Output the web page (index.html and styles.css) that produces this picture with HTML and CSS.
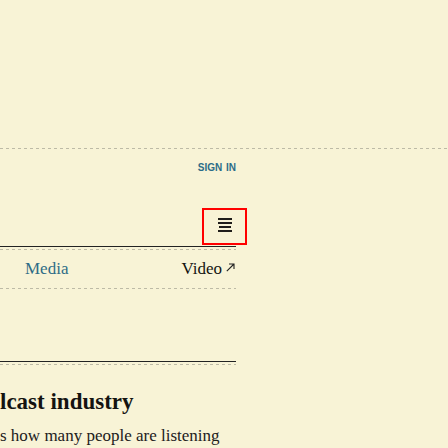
FILE: index.html
```html
<!DOCTYPE html>
<html lang="en">
<head>
<meta charset="utf-8">
<title>Podcast industry</title>
<link rel="stylesheet" href="styles.css">
</head>
<body>
<div class="page">
  <div class="rule-dash rule-full"></div>
  <header class="masthead">
    <div class="signin-row"><a class="signin" href="#">SIGN IN</a></div>
    <div class="menu-row">
      <button class="menu-btn" type="button" aria-label="Menu">
        <svg width="14" height="14" viewBox="0 0 14 14" aria-hidden="true">
          <rect x="0" y="0" width="14" height="2" fill="#1f1d1a"/>
          <rect x="0" y="4" width="14" height="2" fill="#1f1d1a"/>
          <rect x="1" y="8" width="12" height="2" fill="#1f1d1a"/>
          <rect x="0" y="12" width="14" height="2" fill="#1f1d1a"/>
        </svg>
      </button>
    </div>
  </header>
  <nav class="nav col">
    <div class="rule-solid"></div>
    <div class="rule-dash gap2"></div>
    <div class="nav-row">
      <a class="nav-media" href="#">Media</a>
      <a class="nav-video" href="#">Video<svg class="ext" width="9" height="9" viewBox="0 0 9 9" aria-hidden="true"><path d="M0.8 8.2 L8 1 M3 1 H8 V6" fill="none" stroke="#222" stroke-width="1.1"/></svg></a>
    </div>
    <div class="rule-dash"></div>
  </nav>
  <section class="article col">
    <div class="rule-solid"></div>
    <div class="rule-dash gap2"></div>
    <h2 class="headline">lcast industry</h2>
    <p class="standfirst">s how many people are listening<br>and the industry</p>
  </section>
</div>
</body>
</html>
```
FILE: styles.css
```css
html, body {
  margin: 0;
  padding: 0;
  background: #f8f3d6;
  overflow: hidden;
}
.page {
  padding-top: 148px;
  height: 300px;
}
.rule-dash {
  height: 1px;
  background: repeating-linear-gradient(to right, #bdbaa6 0 3px, transparent 3px 6px);
}
.rule-solid {
  height: 1px;
  background: #222;
}
.gap2 { margin-top: 2px; }
.masthead {
  width: 247px;
  display: flex;
  flex-direction: column;
}
.signin-row {
  width: 236px;
  margin-top: 11px;
  text-align: right;
  line-height: 12px;
}
.signin {
  font-family: "Liberation Sans", Arial, sans-serif;
  font-weight: bold;
  font-size: 10px;
  color: #2c6c88;
  text-decoration: none;
  word-spacing: 1px;
}
.menu-row {
  margin-top: 34px;
  display: flex;
  justify-content: flex-end;
}
.menu-btn {
  box-sizing: border-box;
  width: 45px;
  height: 37px;
  border: 2px solid #f00;
  background: transparent;
  padding: 8px 0 0 0;
  margin: 0;
  display: flex;
  justify-content: center;
  align-items: flex-start;
}
.menu-btn svg { display: block; }
.col { width: 236px; }
.nav { margin-top: 1px; }
.nav-row {
  height: 38px;
  display: flex;
  justify-content: space-between;
  align-items: flex-start;
  padding-left: 25px;
  padding-right: 1px;
  font-family: "Liberation Serif", "Times New Roman", serif;
  font-size: 17px;
  line-height: 38px;
}
.nav-row a { text-decoration: none; }
.nav-media { color: #2e6c86; }
.nav-video { color: #141311; }
.ext {
  margin-left: 4px;
  vertical-align: 2px;
}
.article { margin-top: 72px; }
.headline {
  margin: 23px 0 0 0;
  font-family: "Liberation Serif", "Times New Roman", serif;
  font-weight: bold;
  font-size: 23px;
  line-height: 28px;
  color: #141311;
  white-space: nowrap;
}
.standfirst {
  margin: 10px 0 0 0;
  font-family: "Liberation Serif", "Times New Roman", serif;
  font-size: 17px;
  line-height: 19px;
  color: #22201c;
  white-space: nowrap;
}
```
